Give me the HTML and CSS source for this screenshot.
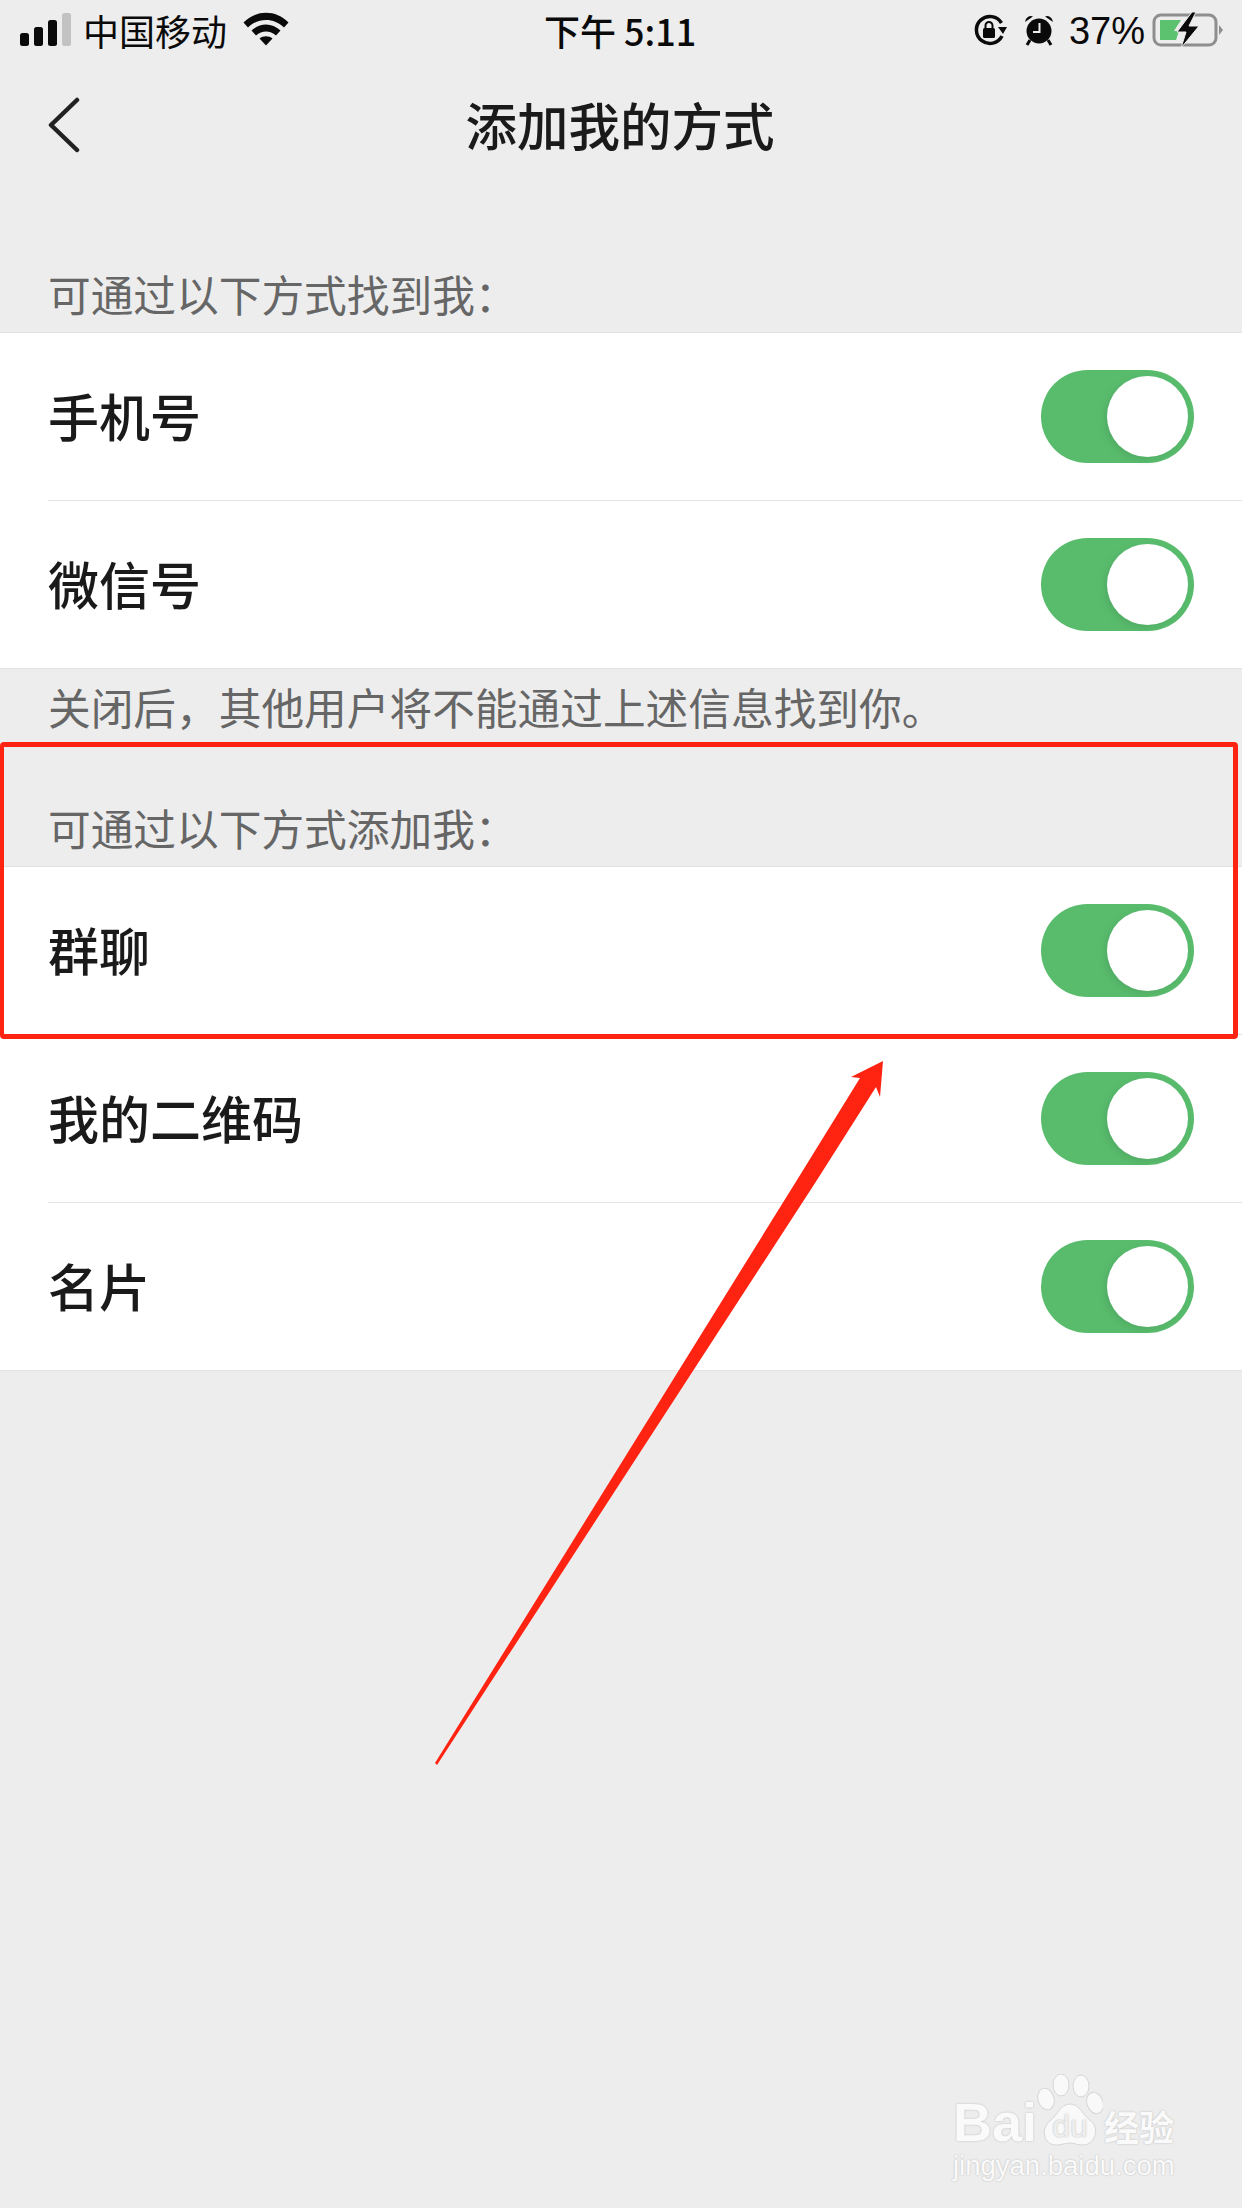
FILE: index.html
```html
<!DOCTYPE html>
<html lang="zh-CN">
<head>
  <meta charset="UTF-8">
  <title>添加我的方式</title>
  <link rel="stylesheet" href="styles.css">
</head>
<body>
  <div class="screen">
    <!-- status bar -->
    <div class="status">
      <div class="status-side">
        <svg class="signal" width="52" height="34" viewBox="0 0 52 34">
          <rect x="0" y="21" width="9" height="13" rx="2.5" fill="#0a0a0a"/>
          <rect x="14" y="15" width="9" height="19" rx="2.5" fill="#0a0a0a"/>
          <rect x="28" y="8" width="9" height="26" rx="2.5" fill="#0a0a0a"/>
          <rect x="42" y="1" width="9" height="33" rx="2.5" fill="#c2c2c2"/>
        </svg>
        <span class="carrier">中国移动</span>
        <svg class="wifi" width="46" height="34" viewBox="0 0 46 34">
          <path d="M0.5 10.5C13 -2.5 33 -2.5 45.5 10.5L41 15.5C31 5.5 15 5.5 5 15.5Z" fill="#0a0a0a"/>
          <path d="M8.5 18.5C17 10.5 29 10.5 37.5 18.5L33 23.5C27 18 19 18 13 23.5Z" fill="#0a0a0a"/>
          <path d="M16.5 26.5C20 23.5 26 23.5 29.500 26.5L23 33.500Z" fill="#0a0a0a"/>
        </svg>
      </div>
      <div class="clock">下午 5:11</div>
      <div class="status-side status-right">
        <svg width="34" height="32" viewBox="0 0 34 32">
          <path d="M28 22A13.500 13.500 0 1 1 27.500 9" fill="none" stroke="#0a0a0a" stroke-width="3.500"/>
          <path d="M24 13H33L29 20Z" fill="#0a0a0a"/>
          <rect x="9" y="14" width="12" height="10" rx="1.500" fill="#0a0a0a"/>
          <path d="M11.500 14V11.500A3.500 3.500 0 0 1 18.500 11.500V14" fill="none" stroke="#0a0a0a" stroke-width="2"/>
        </svg>
        <svg class="alarm" width="30" height="32" viewBox="0 0 30 32">
          <circle cx="15" cy="17" r="12.500" fill="#0a0a0a"/>
          <path d="M1 8A6 6 0 0 1 9 2.500ZM29 8A6 6 0 0 0 21 2.500Z" fill="#0a0a0a"/>
          <path d="M6 26L3 31M24 26L27 31" stroke="#0a0a0a" stroke-width="3"/>
          <path d="M15.500 9V18H9" fill="none" stroke="#eee" stroke-width="2"/>
        </svg>
        <span class="percent">37%</span>
        <svg class="battery" width="74" height="36" viewBox="0 0 74 36">
          <rect x="2" y="3" width="62" height="30" rx="7" fill="none" stroke="#8e8e8e" stroke-width="3"/>
          <path d="M8 8H29L22 19H27L24 28H8Z" fill="#5cc26f"/>
          <path d="M67 13L71 18L67 23Z" fill="#8e8e8e"/>
          <path d="M40 0L25 20H34L29 36L47 14H37L44 0Z" fill="#0a0a0a" stroke="#eee" stroke-width="1"/>
        </svg>
      </div>
    </div>

    <!-- nav -->
    <div class="nav">
      <svg class="back" width="36" height="56" viewBox="0 0 36 56">
        <path d="M31 3L5 28L31 53" fill="none" stroke="#222" stroke-width="4.500" stroke-linecap="round" stroke-linejoin="round"/>
      </svg>
      <h1 class="title">添加我的方式</h1>
    </div>

    <div class="label label-first">可通过以下方式找到我：</div>
    <div class="group">
      <div class="row">
        <span>手机号</span>
        <div class="toggle"><div class="knob"></div></div>
      </div>
      <div class="row">
        <span>微信号</span>
        <div class="toggle"><div class="knob"></div></div>
      </div>
    </div>
    <div class="note">关闭后，其他用户将不能通过上述信息找到你。</div>

    <div class="label">可通过以下方式添加我：</div>
    <div class="group">
      <div class="row">
        <span>群聊</span>
        <div class="toggle"><div class="knob"></div></div>
      </div>
      <div class="row">
        <span>我的二维码</span>
        <div class="toggle"><div class="knob"></div></div>
      </div>
      <div class="row">
        <span>名片</span>
        <div class="toggle"><div class="knob"></div></div>
      </div>
    </div>

    <!-- annotation on top of the screenshot -->
    <div class="red-box"></div>
    <svg class="arrow" width="1242" height="2208" viewBox="0 0 1242 2208">
      <path d="M435 1763L797 1180L860 1078L851 1077L883 1061L880 1097L876 1087L817 1180L437 1765Z" fill="#ff2312"/>
    </svg>

    <!-- watermark -->
    <div class="mark">
      <div class="mark-top">
        <span class="mark-bai">Bai</span>
        <div class="paw">
          <svg width="66" height="74" viewBox="0 0 66 74">
            <g fill="#f9f9f9" stroke="#d6d6d6" stroke-width="1">
              <ellipse cx="9" cy="25" rx="8" ry="11" transform="rotate(-15 9 25)"/>
              <ellipse cx="24" cy="11" rx="8" ry="11"/>
              <ellipse cx="44" cy="12" rx="8" ry="11"/>
              <ellipse cx="58" cy="29" rx="8" ry="11" transform="rotate(-20 58 29)"/>
              <path d="M33 30C43 30 46 42 54 47C63 54 58 71 46 71C40 71 37 69 33 69C28 69 25 71 19 71C7 71 3 55 13 47C21 41 23 30 33 30Z"/>
            </g>
          </svg>
          <span class="paw-du">du</span>
        </div>
        <span class="mark-cn">经验</span>
      </div>
      <div class="mark-url">jingyan.baidu.com</div>
    </div>
  </div>
</body>
</html>
```

FILE: styles.css
```css
* { box-sizing: border-box; }

body {
  margin: 0;
  background: #ededed;
  font-family: "Noto Sans CJK SC", "Noto Sans", sans-serif;
}

.screen {
  position: relative;
  width: 1242px;
  height: 2208px;
  overflow: hidden;
  background: #ededed;
}

/* status bar */
.status {
  position: relative;
  display: flex;
  align-items: center;
  justify-content: space-between;
  height: 60px;
  padding: 0 16px 0 20px;
  color: #0a0a0a;
}

.status-side {
  display: flex;
  align-items: center;
}

.signal { margin-top: -2px; }

.carrier {
  margin-left: 11px;
  font-size: 36px;
  line-height: 60px;
}

.wifi { margin-left: 16px; margin-top: -2px; }

.clock {
  position: absolute;
  left: 544px;
  top: 0;
  font-size: 36px;
  font-weight: 500;
  line-height: 60px;
  white-space: nowrap;
}

.alarm { margin-left: 16px; }

.percent {
  margin-left: 15px;
  padding-top: 2px;
  font-family: "Liberation Sans", sans-serif;
  font-size: 38px;
  line-height: 60px;
}

.battery { margin-left: 7px; }

/* nav */
.nav {
  position: relative;
  display: flex;
  align-items: center;
  justify-content: center;
  height: 130px;
}

.back {
  position: absolute;
  left: 46px;
  top: 37px;
}

.title {
  margin: 0 2px 2px 0;
  font-size: 51.5px;
  font-weight: 500;
  line-height: 128px;
  color: #1a1a1a;
}

/* list */
.label {
  display: flex;
  align-items: center;
  height: 72px;
  margin-top: 49px;
  padding: 0 0 6px 48px;
  font-size: 42.7px;
  color: #666;
}

.label-first {
  margin-top: 70px;
}

.note {
  height: 76px;
  padding: 7px 0 0 48px;
  font-size: 42.7px;
  line-height: 60px;
  color: #666;
}

.group {
  background: #fff;
  border-top: 1px solid #e2e2e2;
  border-bottom: 1px solid #e2e2e2;
}

.row {
  position: relative;
  display: flex;
  align-items: center;
  justify-content: space-between;
  height: 167px;
  padding: 0 48px;
  font-size: 51px;
  font-weight: 500;
  color: #1a1a1a;
}

.row span {
  margin-bottom: 4px;
}

.row + .row {
  margin-top: 1px;
}

.row + .row::before {
  content: "";
  position: absolute;
  top: -1px;
  left: 48px;
  right: 0;
  border-top: 1px solid #e4e4e4;
}

.toggle {
  display: flex;
  align-items: center;
  justify-content: flex-end;
  width: 153px;
  height: 93px;
  padding-right: 6px;
  border-radius: 47px;
  background: #59bc6d;
}

.knob {
  width: 81px;
  height: 81px;
  border-radius: 50%;
  background: #fff;
  box-shadow: -3px 3px 6px rgba(60, 130, 80, 0.25);
}

/* annotation */
.red-box {
  position: absolute;
  left: 0;
  top: 742px;
  width: 1238px;
  height: 297px;
  border: 5px solid #ff2312;
  border-left-width: 4px;
  border-radius: 4px;
}

.arrow {
  position: absolute;
  left: 0;
  top: 0;
}

/* watermark */
.mark {
  position: absolute;
  left: 953px;
  top: 2072px;
  width: 230px;
  color: #fafafa;
  text-shadow: 0 0 2px #b5b5b5;
}

.mark-top {
  display: flex;
  align-items: flex-end;
  height: 76px;
}

.mark-bai {
  margin-bottom: -4px;
  font-family: "Liberation Sans", sans-serif;
  font-size: 54px;
  font-weight: 700;
  line-height: 60px;
}

.paw {
  position: relative;
  width: 66px;
  height: 74px;
}

.paw-du {
  position: absolute;
  left: 8px;
  top: 32px;
  width: 50px;
  text-align: center;
  font-family: "Liberation Sans", sans-serif;
  font-size: 32px;
  line-height: 40px;
  color: #efefef;
}

.mark-cn {
  margin-left: 1px;
  font-size: 35px;
  font-weight: 700;
  line-height: 44px;
  white-space: nowrap;
}

.mark-url {
  margin-top: 2px;
  font-family: "Liberation Sans", sans-serif;
  font-size: 27.5px;
  line-height: 32px;
  white-space: nowrap;
}
```
